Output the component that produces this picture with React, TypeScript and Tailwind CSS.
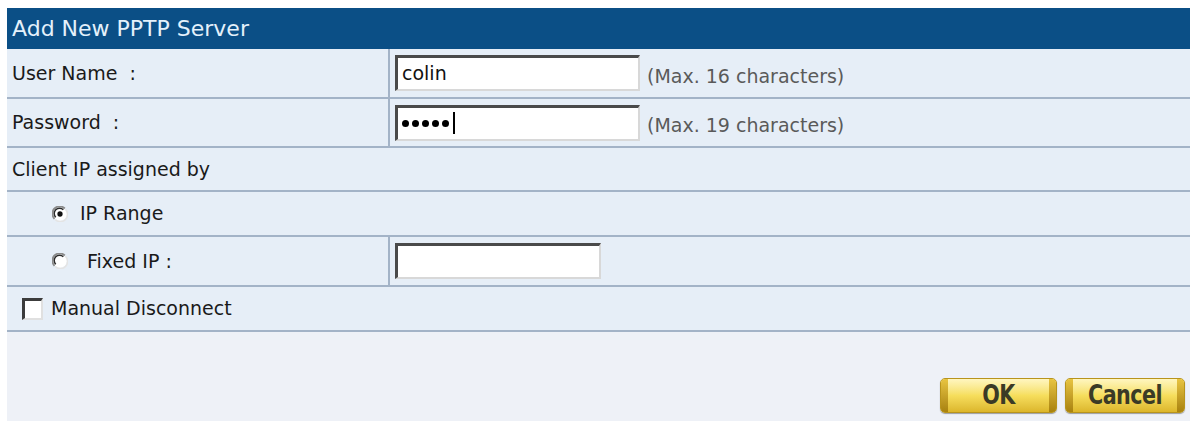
function Radio({ checked }: { checked?: boolean }) {
  return (
    <svg width="16" height="16" viewBox="0 0 14 14" className="shrink-0">
      <circle cx="7" cy="7" r="6" fill="#ffffff" />
      <path d="M2.2 11.2 A6 6 0 0 1 11.2 2.2" fill="none" stroke="#8a8a8a" strokeWidth="1.6" />
      <path d="M3.3 9.9 A4.4 4.4 0 0 1 9.9 3.3" fill="none" stroke="#2b2b2b" strokeWidth="1.3" />
      <path d="M11.8 2.8 A6 6 0 0 1 2.8 11.8" fill="none" stroke="#e4e4e4" strokeWidth="1.4" />
      {checked && <circle cx="7" cy="7" r="2.3" fill="#111111" />}
    </svg>
  );
}

function TextBox({ width, children }: { width: string; children?: React.ReactNode }) {
  return (
    <div
      className={`${width} h-[36px] bg-white flex items-center pl-[4px] border-t-[3px] border-l-[3px] border-b-[2px] border-r-[2px] border-t-[#4a4a4a] border-l-[#4a4a4a] border-b-[#d8d8d8] border-r-[#d8d8d8] text-[19px] text-[#111]`}
    >
      {children}
    </div>
  );
}

function GoldButton({ label, width }: { label: string; width: string }) {
  return (
    <div
      className={`${width} h-[35px] flex items-stretch rounded-[5px] border border-[#b8941c] bg-gradient-to-b from-[#fff6bf] via-[#f6de5c] to-[#dcb62a] shadow-[0_1px_1px_rgba(0,0,0,0.35)]`}
    >
      <span className="w-[7px] rounded-l-[4px] bg-gradient-to-b from-[#e8c440] to-[#a8820e]" />
      <span
        className="flex-1 flex items-center justify-center text-[23px] font-bold text-[#3a3a26] tracking-tight scale-y-[1.15]"
        style={{ fontFamily: '"DejaVu Sans Condensed", "Liberation Sans Narrow", sans-serif' }}
      >
        {label}
      </span>
      <span className="w-[7px] rounded-r-[4px] bg-gradient-to-b from-[#e8c440] to-[#a8820e]" />
    </div>
  );
}

export default function App() {
  return (
    <div
      className="w-[1190px] h-[421px] bg-white pl-[7px] pt-[8px] flex flex-col overflow-hidden text-[19px] text-[#1a1a1a]"
      style={{ fontFamily: '"DejaVu Sans", Tahoma, sans-serif' }}
    >
      {/* Header */}
      <div className="h-[41px] shrink-0 bg-[#0b4f86] text-[#e4f1fb] text-[22px] flex items-center pl-[5px]">
        Add New PPTP Server
      </div>

      {/* User Name */}
      <div className="h-[50px] shrink-0 flex bg-[#e6eef7] border-b-2 border-[#a3b3c7]">
        <div className="w-[383px] flex items-center pl-[5px] border-r-2 border-[#a3b3c7]">User Name &nbsp;:</div>
        <div className="flex items-center pl-[5px] gap-[7px]">
          <TextBox width="w-[245px]">colin</TextBox>
          <span className="text-[#5a5a5a] pt-[6px]">(Max. 16 characters)</span>
        </div>
      </div>

      {/* Password */}
      <div className="h-[49px] shrink-0 flex bg-[#e6eef7] border-b-2 border-[#a3b3c7]">
        <div className="w-[383px] flex items-center pl-[5px] border-r-2 border-[#a3b3c7]">Password &nbsp;:</div>
        <div className="flex items-center pl-[5px] gap-[7px]">
          <TextBox width="w-[245px]">
            <span className="flex items-center gap-[3px]">
              {[0, 1, 2, 3, 4].map((i) => (
                <span key={i} className="w-[7px] h-[7px] rounded-full bg-black" />
              ))}
              <span className="w-[2px] h-[22px] bg-black ml-[1px]" />
            </span>
          </TextBox>
          <span className="text-[#5a5a5a] pt-[6px]">(Max. 19 characters)</span>
        </div>
      </div>

      {/* Client IP assigned by */}
      <div className="h-[44px] shrink-0 flex items-center pl-[5px] bg-[#e6eef7] border-b-2 border-[#a3b3c7]">
        Client IP assigned by
      </div>

      {/* IP Range */}
      <div className="h-[45px] shrink-0 flex items-center pl-[45px] gap-[12px] bg-[#e6eef7] border-b-2 border-[#a3b3c7]">
        <Radio checked />
        <span>IP Range</span>
      </div>

      {/* Fixed IP */}
      <div className="h-[50px] shrink-0 flex bg-[#e6eef7] border-b-2 border-[#a3b3c7]">
        <div className="w-[383px] flex items-center pl-[45px] gap-[19px] border-r-2 border-[#a3b3c7]">
          <Radio />
          <span>Fixed IP :</span>
        </div>
        <div className="flex items-center pl-[5px]">
          <TextBox width="w-[206px]" />
        </div>
      </div>

      {/* Manual Disconnect */}
      <div className="h-[45px] shrink-0 flex items-center pl-[15px] gap-[8px] bg-[#e6eef7] border-b-2 border-[#a3b3c7]">
        <span className="w-[21px] h-[22px] bg-white border-t-[3px] border-l-[3px] border-b-[2px] border-r-[2px] border-t-[#3c3c3c] border-l-[#3c3c3c] border-b-[#e0e0e0] border-r-[#e0e0e0]" />
        <span>Manual Disconnect</span>
      </div>

      {/* Footer */}
      <div className="flex-1 bg-[#eef1f7] flex items-end justify-end gap-[8px] pr-[5px] pb-[8px]">
        <GoldButton label="OK" width="w-[117px]" />
        <GoldButton label="Cancel" width="w-[120px]" />
      </div>
    </div>
  );
}
